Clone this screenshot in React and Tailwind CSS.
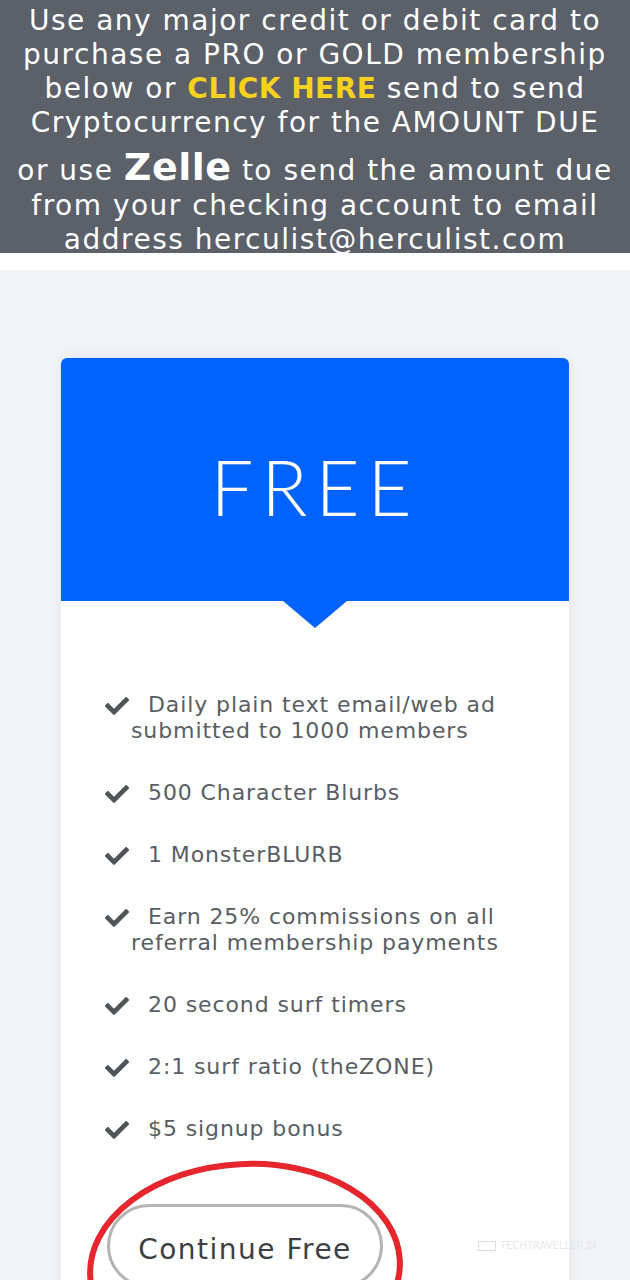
import { FaCheck } from 'react-icons/fa'

function Feature({ children }) {
  return (
    <li className="relative pl-[70px] pr-6 indent-[17px] text-[22px] leading-[26px] tracking-[0.9px] text-[#595d64]">
      <FaCheck className="absolute left-[44px] top-[2px] text-[24px] text-[#4f535a]" />
      {children}
    </li>
  )
}

export default function App() {
  const features = [
    'Daily plain text email/web ad submitted to 1000 members',
    '500 Character Blurbs',
    '1 MonsterBLURB',
    'Earn 25% commissions on all referral membership payments',
    '20 second surf timers',
    '2:1 surf ratio (theZONE)',
    '$5 signup bonus',
  ]

  return (
    <div className="h-[1280px] overflow-hidden bg-white font-['DejaVu_Sans',sans-serif]">
      {/* payment notice */}
      <div className="h-[253px] bg-[#5b6069] pt-[4px] text-center text-[28px] leading-[34px] tracking-[1.5px] text-white">
        <p>Use any major credit or debit card to</p>
        <p>purchase a PRO or GOLD membership</p>
        <p>
          below or <span className="font-bold tracking-[0.5px] text-[#f7d21c]">CLICK HERE</span> send to send
        </p>
        <p>Cryptocurrency for the AMOUNT DUE</p>
        <p className="leading-[54px]">
          or use <span className="text-[38px] font-bold tracking-[0.5px]">Zelle</span> to send the amount due
        </p>
        <p className="-mt-[9px]">from your checking account to email</p>
        <p>address herculist@herculist.com</p>
      </div>

      <div className="h-[17px] bg-white" />

      <div className="relative h-[1010px] bg-[#f3f4f7] px-[61px] pt-[88px]">
        <div className="relative h-[1000px] rounded-md bg-white shadow-[0_0_14px_rgba(0,0,0,0.08)]">
          <div className="relative flex h-[243px] items-center justify-center rounded-t-md bg-[#0062ff]">
            <h1 className="pt-[14px] font-['Lato',sans-serif] text-[76px] font-light tracking-[8px] text-white">FREE</h1>
            <div className="absolute left-1/2 top-full h-0 w-0 -translate-x-1/2 border-x-[32px] border-t-[27px] border-x-transparent border-t-[#0062ff]" />
          </div>

          <ul className="flex flex-col gap-[36px] pt-[91px]">
            {features.map((f) => (
              <Feature key={f}>{f}</Feature>
            ))}
          </ul>

          <div className="relative mt-[62px] pl-[46px]">
            <button className="h-[84px] w-[276px] rounded-full border-[3px] border-[#b4b4b4] bg-white pt-[8px] text-[28px] tracking-[1.5px] text-[#3c3f44]">
              Continue Free
            </button>
            <svg className="absolute left-[24px] top-[-48px]" width="320" height="220" viewBox="0 0 320 220">
              <ellipse cx="160" cy="112" rx="155" ry="104" fill="none" stroke="#e5262c" strokeWidth="6" transform="rotate(-3 160 112)" />
            </svg>
          </div>
        </div>
        <div className="absolute left-[478px] top-[968px] flex items-center gap-1 text-[10px] text-[#e6e8eb]">
          <span className="inline-block h-[10px] w-[18px] border border-[#dcdde0]" />
          <span>TECHTRAVELLER.IN</span>
        </div>
      </div>
    </div>
  )
}
